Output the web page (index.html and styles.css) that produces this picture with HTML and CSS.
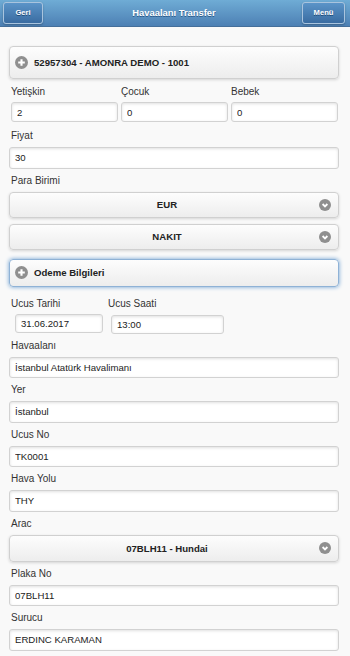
FILE: index.html
```
<!DOCTYPE html>
<html lang="tr">
<head>
<meta charset="utf-8">
<title>Havaalanı Transfer</title>
<link rel="stylesheet" href="styles.css">
</head>
<body>
<header class="header">
  <a class="hbtn hbtn-left">Geri</a>
  <h1 class="title">Havaalanı Transfer</h1>
  <a class="hbtn hbtn-right">Menü</a>
</header>
<main class="content">
  <div class="coll coll-first">
    <svg class="plus" viewBox="0 0 13 13"><circle cx="6.5" cy="6.5" r="6.5" fill="#8f8f8f"/><path d="M6.5 3.2v6.6M3.2 6.5h6.6" stroke="#fff" stroke-width="2.1"/></svg>
    <span>52957304 - AMONRA DEMO - 1001</span>
  </div>

  <div class="grid3">
    <div class="cell"><label class="lbl lbl-top">Yetişkin</label><input class="inp inp-s" value="2"></div>
    <div class="cell"><label class="lbl lbl-top">Çocuk</label><input class="inp inp-s" value="0"></div>
    <div class="cell"><label class="lbl lbl-top">Bebek</label><input class="inp inp-s" value="0"></div>
  </div>

  <label class="lbl lbl-fiyat">Fiyat</label>
  <input class="inp" value="30">

  <label class="lbl">Para Birimi</label>
  <div class="sel"><span class="seltext">EUR</span><svg class="chev" viewBox="0 0 12 12"><circle cx="6" cy="6" r="6" fill="#8f8f8f"/><path d="M3.6 5l2.4 2.4L8.4 5" fill="none" stroke="#fff" stroke-width="1.8"/></svg></div>
  <div class="sel sel-next"><span class="seltext">NAKIT</span><svg class="chev" viewBox="0 0 12 12"><circle cx="6" cy="6" r="6" fill="#8f8f8f"/><path d="M3.6 5l2.4 2.4L8.4 5" fill="none" stroke="#fff" stroke-width="1.8"/></svg></div>

  <div class="coll coll-focus">
    <svg class="plus" viewBox="0 0 13 13"><circle cx="6.5" cy="6.5" r="6.5" fill="#8f8f8f"/><path d="M6.5 3.2v6.6M3.2 6.5h6.6" stroke="#fff" stroke-width="2.1"/></svg>
    <span>Odeme Bilgileri</span>
  </div>

  <div class="row2">
    <div class="dcell dcell-1"><label class="lbl lbl-date">Ucus Tarihi</label><input class="inp inp-d inp-d1" value="31.06.2017"></div>
    <div class="dcell dcell-2"><label class="lbl lbl-date">Ucus Saati</label><input class="inp inp-d inp-d2" value="13:00"></div>
  </div>

  <label class="lbl">Havaalanı</label>
  <input class="inp" value="İstanbul Atatürk Havalimanı">

  <label class="lbl">Yer</label>
  <input class="inp" value="İstanbul">

  <label class="lbl">Ucus No</label>
  <input class="inp" value="TK0001">

  <label class="lbl">Hava Yolu</label>
  <input class="inp" value="THY">

  <label class="lbl">Arac</label>
  <div class="sel sel-arac"><span class="seltext">07BLH11 - Hundai</span><svg class="chev" viewBox="0 0 12 12"><circle cx="6" cy="6" r="6" fill="#8f8f8f"/><path d="M3.6 5l2.4 2.4L8.4 5" fill="none" stroke="#fff" stroke-width="1.8"/></svg></div>

  <label class="lbl">Plaka No</label>
  <input class="inp" value="07BLH11">

  <label class="lbl">Surucu</label>
  <input class="inp" value="ERDINC KARAMAN">
</main>
</body>
</html>
```
FILE: styles.css
```
* { box-sizing: border-box; }
html, body { margin: 0; padding: 0; }
body {
  background: #f9f9f9;
  font-family: "Liberation Sans", Arial, Helvetica, sans-serif;
  color: #333;
  width: 350px;
  height: 656px;
  overflow: hidden;
}
.header {
  height: 27px;
  background: linear-gradient(#6facd5, #4d80b4);
  border-bottom: 1px solid #456f9a;
  display: grid;
  grid-template-columns: 1fr auto 1fr;
  align-items: center;
  padding: 0 5px 1px 3px;
}
.hbtn {
  height: 22px;
  border: 1px solid #a9c4de;
  border-radius: 3px;
  background: linear-gradient(#5b94c8, #3a6ca1);
  color: #fff;
  font-weight: bold;
  font-size: 7.6px;
  text-shadow: 0 1px 0 #1d4b78;
  display: flex;
  align-items: center;
  justify-content: center;
  box-shadow: 0 1px 2px rgba(0,0,0,.25);
}
.hbtn-left { justify-self: start; width: 40px; }
.hbtn-right { justify-self: end; width: 43px; }
.title {
  margin: 0;
  color: #fff;
  font-size: 9.4px;
  font-weight: bold;
  text-shadow: 0 1px 0 #2b5a8a;
  text-align: center;
}
.content {
  padding: 0 11px 0 9px;
}
.coll {
  height: 33px;
  border: 1px solid #d0d0d0;
  border-radius: 4px;
  background: linear-gradient(#fdfdfd, #ededed);
  box-shadow: 0 1px 3px rgba(0,0,0,.15);
  display: flex;
  align-items: center;
  padding-left: 5px;
  gap: 6px;
  font-weight: bold;
  font-size: 9.6px;
  color: #222;
}
.coll-first { margin-top: 19px; }
.coll-focus {
  margin-top: 9px;
  height: 28px;
  border-color: #8fb2d6;
  box-shadow: 0 0 4px #6c9fd2;
}
.plus { width: 13px; height: 13px; flex: none; }
.grid3 {
  display: grid;
  grid-template-columns: 1fr 1fr 1fr;
  column-gap: 3px;
  padding: 0 1px 0 2px;
}
.cell { display: flex; flex-direction: column; }
.lbl {
  display: block;
  font-size: 10px;
  line-height: 13px;
  color: #333;
  margin-top: 5px;
  padding-left: 2px;
}
.lbl-top { margin-top: 6px; padding-left: 0; }
.lbl-fiyat { margin-top: 7px; }
.inp {
  display: block;
  width: 100%;
  height: 21.5px;
  margin: 5px 0 0 0;
  border: 1px solid #d2d2d2;
  border-radius: 3px;
  background: #fff;
  box-shadow: inset 0 1px 3px rgba(0,0,0,.12);
  font-family: inherit;
  font-size: 9.6px;
  color: #222;
  padding: 0 0 0 5px;
  outline: none;
}
.inp-s { margin-top: 4px; height: 20px; }
.sel {
  margin-top: 5px;
  height: 26px;
  border: 1px solid #d0d0d0;
  border-radius: 4px;
  background: linear-gradient(#fdfdfd, #ededed);
  box-shadow: 0 1px 3px rgba(0,0,0,.15);
  display: flex;
  align-items: center;
  padding: 0 7px 0 10px;
}
.sel-next { margin-top: 6px; }
.sel-arac { height: 27px; }
.seltext {
  flex: 1;
  text-align: center;
  margin-right: 5px;
  font-weight: bold;
  font-size: 9.6px;
  color: #222;
}
.chev { width: 12px; height: 12px; flex: none; }
.row2 {
  display: flex;
  margin-top: 10px;
  padding-left: 2px;
}
.dcell-1 { width: 97px; }
.dcell-2 { width: 120px; }
.lbl-date { margin-top: 0; padding-left: 0; }
.inp-d { margin-top: 4px; height: 19px; }
.inp-d1 { width: 88px; margin-left: 4px; }
.inp-d2 { width: 113px; margin-left: 3px; margin-top: 5px; }
```
